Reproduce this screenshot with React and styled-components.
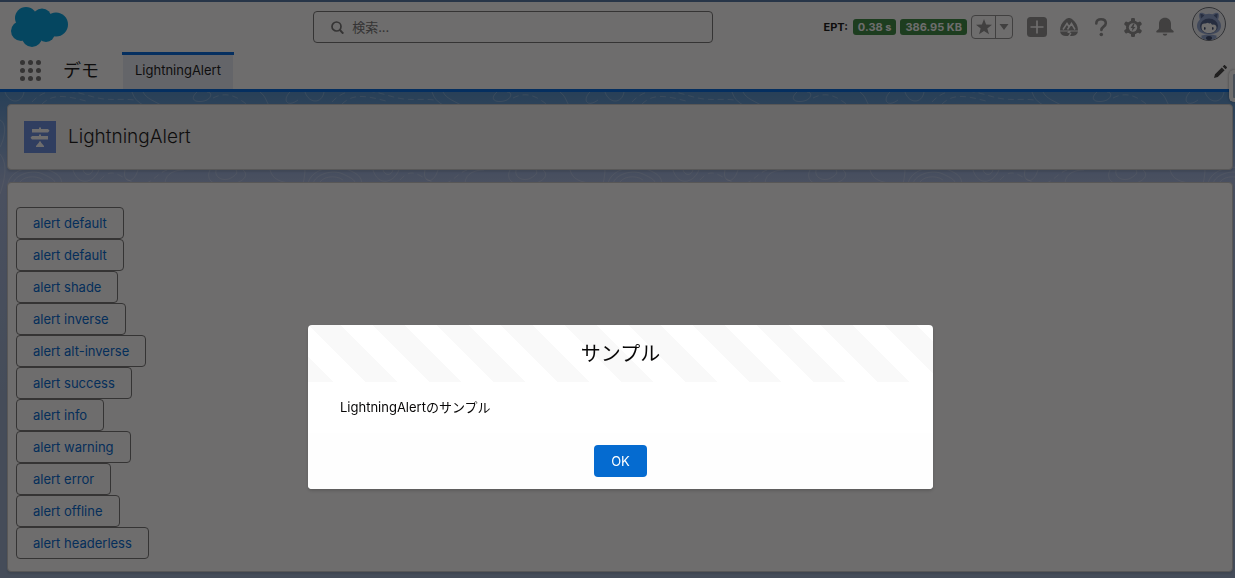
import React, { useState } from 'react';
import styled, { createGlobalStyle } from 'styled-components';

const GlobalStyle = createGlobalStyle`
  *, *::before, *::after {
    box-sizing: border-box;
  }
  body {
    margin: 0;
    font-family: Inter, 'Noto Sans CJK JP', sans-serif;
    font-size: 13px;
    line-height: 19px;
    color: #181818;
    background: #9bb0cf;
  }
  button, input {
    font: inherit;
  }
`;

const Page = styled.div`
  min-height: 100vh;
  display: flex;
  flex-direction: column;
`;

const Header = styled.header`
  background: #fff;
  border-top: 2px solid #5478a6;
  border-bottom: 3px solid #006ae0;
`;

const TopRow = styled.div`
  display: grid;
  grid-template-columns: minmax(0, 3fr) 400px minmax(0, 5fr);
  align-items: center;
  height: 50px;
`;

const LogoLink = styled.a`
  display: block;
  width: 58px;
  height: 40px;
  margin-left: 11px;
`;

const SearchBox = styled.label`
  display: flex;
  align-items: center;
  gap: 8px;
  height: 32px;
  padding: 0 16px;
  border: 1px solid #747474;
  border-radius: 4px;
  color: #747474;
`;

const SearchInput = styled.input`
  flex: 1;
  min-width: 0;
  border: 0;
  padding: 0;
  outline: none;
  background: transparent;

  &::placeholder {
    color: #747474;
    opacity: 1;
  }
`;

const Tools = styled.div`
  display: flex;
  align-items: center;
  justify-content: flex-end;
  height: 100%;
  padding-right: 9px;
`;

const Ept = styled.span`
  margin-right: 5px;
  font-size: 11px;
  font-weight: 700;
`;

const Badge = styled.span`
  margin-right: 4px;
  padding: 0 5px;
  border-radius: 3px;
  font-size: 11px;
  line-height: 16px;
  font-weight: 700;
  white-space: nowrap;
  color: #fff;
  background: #3a8a42;
`;

const Favorites = styled.div`
  display: flex;
  height: 24px;
  margin-right: 8px;
  border: 1px solid #919191;
  border-radius: 4px;
`;

const FavButton = styled.button`
  display: flex;
  align-items: center;
  justify-content: center;
  width: ${({ $narrow }) => ($narrow ? '17px' : '23px')};
  padding: 0;
  border: 0;
  border-left: ${({ $narrow }) => ($narrow ? '1px solid #919191' : '0')};
  background: transparent;
  color: #919191;
`;

const ToolButton = styled.button`
  display: flex;
  align-items: center;
  justify-content: center;
  width: 32px;
  height: 32px;
  padding: 0;
  border: 0;
  background: transparent;
  color: #919191;
`;

const AvatarButton = styled.button`
  align-self: flex-start;
  width: 34px;
  height: 34px;
  margin: 5px 0 0 11px;
  padding: 0;
  border: 0;
  background: transparent;
`;

const NavRow = styled.nav`
  display: flex;
  align-items: center;
  height: 37px;
  padding: 0 8px 0 20px;
`;

const PlainButton = styled.button`
  display: flex;
  padding: 0;
  border: 0;
  background: transparent;
  color: ${({ $color }) => $color};
`;

const AppName = styled.span`
  margin: 0 24px 0 22px;
  font-size: 18px;
  line-height: 24px;
`;

const Tab = styled.a`
  position: relative;
  display: flex;
  align-items: center;
  height: 100%;
  padding: 0 12px;
  color: #181818;
  text-decoration: none;
  background: #e6ecf6;

  &::before {
    content: '';
    position: absolute;
    top: 0;
    left: -1px;
    right: -1px;
    height: 3px;
    background: #006ae0;
  }
`;

const Spacer = styled.div`
  flex: 1;
`;

const Main = styled.main`
  position: relative;
  flex: 1;
  display: flex;
  flex-direction: column;
  gap: 12px;
  padding: 12px 2px 6px 7px;
  background: linear-gradient(#5692cc 0, #a8b9df 90px, #9bb0cf 300px);
`;

const Contours = styled.svg`
  position: absolute;
  inset: 0;
  width: 100%;
  height: 130px;
`;

const SideHandle = styled.div`
  position: absolute;
  top: -22px;
  right: 0;
  width: 6px;
  height: 32px;
  border: 4px solid #fff;
  border-right: 0;
  border-radius: 5px 0 0 5px;
  background: #a4b6cc;
  box-shadow: 0 0 3px rgba(0, 0, 0, 0.4);
`;

const Card = styled.section`
  position: relative;
  border: 1px solid #c9c9c9;
  border-radius: 4px;
  box-shadow: 0 2px 2px rgba(0, 0, 0, 0.1);
`;

const PageHeader = styled(Card)`
  display: flex;
  align-items: center;
  gap: 12px;
  padding: 16px;
  background: #f3f3f3;
`;

const PageIcon = styled.svg`
  display: block;
  width: 32px;
  height: 32px;
  background: #6a8de0;
`;

const PageTitle = styled.h1`
  margin: 0;
  font-size: 19px;
  line-height: 24px;
  font-weight: 300;
`;

const Content = styled(Card)`
  flex: 1;
  display: flex;
  flex-direction: column;
  align-items: flex-start;
  padding: 24px 8px 12px;
  background: #fff;
`;

const AlertButton = styled.button`
  height: 32px;
  padding: 0 16px;
  border: 1px solid #747474;
  border-radius: 4px;
  background: #fff;
  color: #0068d2;
`;

const Backdrop = styled.div`
  position: fixed;
  inset: 0;
  display: flex;
  align-items: flex-end;
  justify-content: center;
  padding: 0 0 89px 6px;
  background: rgba(8, 7, 7, 0.59);
`;

const Modal = styled.div`
  width: 625px;
  max-width: 90%;
  overflow: hidden;
  border-radius: 4px;
  color: #080707;
  background: #fff;
  box-shadow: 0 2px 3px rgba(0, 0, 0, 0.16);
`;

const ModalTitle = styled.h2`
  margin: 0;
  padding: 17px 16px 15px;
  font-size: 20px;
  line-height: 25px;
  font-weight: 400;
  text-align: center;
  background-image: linear-gradient(
    45deg,
    rgba(0, 0, 0, 0.025) 25%,
    transparent 25%,
    transparent 50%,
    rgba(0, 0, 0, 0.025) 50%,
    rgba(0, 0, 0, 0.025) 75%,
    transparent 75%
  );
  background-size: 64px 64px;
`;

const ModalBody = styled.div`
  padding: 16px 32px;
`;

const ModalFooter = styled.div`
  display: flex;
  justify-content: center;
  padding: 12px;
  background: #fefefe;
`;

const OkButton = styled.button`
  height: 32px;
  padding: 0 17px;
  border: 0;
  border-radius: 4px;
  color: #fff;
  background: #056bd0;
`;

const alerts = [
  'default',
  'default',
  'shade',
  'inverse',
  'alt-inverse',
  'success',
  'info',
  'warning',
  'error',
  'offline',
  'headerless',
];

const CloudLogo = () => (
  <svg width="58" height="40" viewBox="0 0 58 40" fill="#00a1e0">
    <circle cx="15" cy="11" r="11" />
    <circle cx="31" cy="11" r="9.5" />
    <circle cx="45" cy="17.500" r="12" />
    <circle cx="10" cy="24" r="10" />
    <circle cx="21" cy="30" r="10" />
    <circle cx="35" cy="26" r="9" />
    <path d="M12 8h30v20H12z" />
  </svg>
);

const Launcher = () => (
  <svg width="21" height="21" viewBox="0 0 21 21" fill="currentColor">
    {[2.5, 10.5, 18.5].map((y) =>
      [2.5, 10.5, 18.5].map((x) => <circle key={`${x}-${y}`} cx={x} cy={y} r="2.5" />)
    )}
  </svg>
);

const SearchIcon = () => (
  <svg width="14" height="14" viewBox="0 0 14 14" fill="none" stroke="currentColor" strokeWidth="1.700">
    <circle cx="6.500" cy="6.500" r="4.500" />
    <path d="M9.700 9.700l3.600 3.900" strokeWidth="2" />
  </svg>
);

const PlusIcon = () => (
  <svg width="20" height="20" viewBox="0 0 20 20">
    <rect width="20" height="20" rx="3.500" fill="currentColor" />
    <path d="M10 3.500v13M3.500 10h13" stroke="#fff" strokeWidth="1.700" />
  </svg>
);

const TrailIcon = () => (
  <svg width="20" height="20" viewBox="0 0 20 20">
    <path d="M1 13.500C1 9 3 5 6.500 2.500c2-2 5-2 7 0C17 5 19 9 19 13.500z" fill="currentColor" />
    <path d="M4 12.500l4-6 2.500 4M8.500 12.500l4-6 3.500 6" fill="none" stroke="#fff" strokeWidth="1.500" />
    <path d="M1 14.500h8.500l-1.500 1 3 1-2 2.500H7c-3 0-5.500-1.500-6-4.500zM12 14.500h7c-.5 3-3 4.500-6.500 4.500H11l1.500-3-2-.700z" fill="currentColor" />
  </svg>
);

const HelpIcon = () => (
  <svg width="20" height="20" viewBox="0 0 20 20">
    <path
      d="M5.300 6.500C5.300 3.500 7.200 2.300 10 2.300s4.800 1.500 4.800 4c0 3.400-4.400 3.300-4.400 6.700"
      fill="none"
      stroke="currentColor"
      strokeWidth="2.600"
      strokeLinecap="round"
    />
    <circle cx="10.300" cy="17.500" r="1.800" fill="currentColor" />
  </svg>
);

const GearIcon = () => (
  <svg width="20" height="20" viewBox="0 0 20 20">
    <g fill="currentColor">
      {[0, 60, 120].map((a) => (
        <rect key={a} x="8" y="1" width="4" height="19" rx="1.300" transform={`rotate(${a} 10 10.500)`} />
      ))}
      <circle cx="10" cy="10.500" r="7" />
    </g>
    <circle cx="10" cy="10.500" r="4.200" fill="#fff" />
    <path d="M10.300 6.800L7.500 11h2l-.7 3.300L12.500 10h-2l1-3.200z" fill="currentColor" />
  </svg>
);

const BellIcon = () => (
  <svg width="20" height="20" viewBox="0 0 20 20" fill="currentColor">
    <path d="M10 .8c-3.600 0-6 2.600-6 6v4.500c0 1.500-2.800 2.200-2.800 3.500 0 .5.300.7.800.7h16c.5 0 .8-.2.800-.7 0-1.300-2.800-2-2.800-3.500V6.800c0-3.400-2.400-6-6-6z" />
    <path d="M7.700 16.800h4.600c-.2 1.300-1.100 2-2.300 2s-2.100-.7-2.300-2z" />
  </svg>
);

const Avatar = () => (
  <svg width="34" height="34" viewBox="0 0 34 34">
    <circle cx="17" cy="17" r="16.500" fill="#f0f2f7" stroke="#6b7078" />
    <path d="M7.500 6.500c1-1.500 4-.5 6 .8 2.500-.8 4.500-.8 7 0 2-1.300 5-2.300 6-.8.8 2 .3 4-.4 6C30 16 30 22 26 25c-5 3-13 3-18 0-4-3-4-9-.1-12.500-.7-2-1.200-4-.4-6z" fill="#90a5d2" />
    <path d="M8.300 6.800c1.500 0 3 .8 4 1.700L9 11.500zM25.700 6.800c-1.500 0-3 .8-4 1.700l3.300 3z" fill="#51648f" />
    <ellipse cx="17" cy="19" rx="9" ry="7.500" fill="#51648f" />
    <path d="M9.500 20c0-2.500 1-3.500 3-3.500 1.500 0 2-.8 3.500-.8.5 1 2 1 3 .3 0 1.500 1.500 2 2.500 1.500 1.500.2 3 1 3 3 0 3.700-3.500 5.500-7.500 5.500s-7.500-2-7.500-6z" fill="#fff" />
    <ellipse cx="12.800" cy="21.500" rx=".8" ry="1.400" fill="#3b4a6e" />
    <ellipse cx="20.800" cy="21.500" rx=".8" ry="1.400" fill="#3b4a6e" />
    <path d="M9.500 28.500c4-1.500 11-1.500 15 0V31c-4 2.500-11 2.500-15 0z" fill="#90a5d2" />
    <ellipse cx="17" cy="31" rx="3" ry="2" fill="#3b4a6e" />
  </svg>
);

const PencilIcon = () => (
  <svg width="13" height="14" viewBox="0 0 13 14" fill="currentColor">
    <path d="M0 14l1-3.800L7.800 3.400l2.800 2.800L3.800 13zM8.700 2.500l1.100-1.100c.5-.5 1-.5 1.400 0l1.400 1.400c.5.5.5 1 0 1.400l-1.100 1.100z" />
  </svg>
);

const Topography = () => (
  <Contours aria-hidden="true">
    <defs>
      <pattern id="topo" width="300" height="130" patternUnits="userSpaceOnUse">
        <g fill="none" stroke="#fff" strokeOpacity=".22">
          <path d="M5 0c4 12 17 12 19 0M132 0c4 12 12 14 28 18M143 0c4 9 20 11 23 18M197 0c-9 8 0 12 10 8 5-3 5-8 0-8M260 0c8 6 5 12 14 18M290 0c-8 8-3 16 8 8" />
          <path d="M32 10c15-17 38-12 58-6s27 2 45 4M42 12c12-12 28-7 44-3M213 6c16-8 26 0 41 12" strokeDasharray="6 4" />
          <path d="M0 28c8 4 4 20 0 27M0 62c8 10 5 25 0 40" />
          <path d="M8 92c2-14 24-20 38-15s17 10 15 18M13 92c2-10 20-15 30-10s13 6 12 12M19 92c2-7 16-10 24-4M73 78c5 16 20 14 26 0M83 78c2 6 8 6 10 0M125 78c-3 12 8 16 13 0M165 92c0-12 12-14 19-14M210 78c-6 12 8 18 23 14s14-11 10-14M216 78c-2 8 8 12 15 8s6-6 5-8M270 78c3 10 10 12 25 14" />
          <path d="M100 88c13-15 20-2 35 3s20-9 32-13" strokeDasharray="6 4" />
        </g>
      </pattern>
    </defs>
    <rect width="100%" height="130" fill="url(#topo)" />
  </Contours>
);

const App = () => {
  const [open, setOpen] = useState(true);

  return (
    <Page>
      <GlobalStyle />
      <Header>
        <TopRow>
          <LogoLink href="#" aria-label="Salesforce">
            <CloudLogo />
          </LogoLink>
          <SearchBox>
            <SearchIcon />
            <SearchInput type="search" placeholder="検索..." aria-label="検索" />
          </SearchBox>
          <Tools>
            <Ept>EPT:</Ept>
            <Badge>0.38 s</Badge>
            <Badge>386.95 KB</Badge>
            <Favorites>
              <FavButton aria-label="お気に入り">
                <svg width="16" height="16" viewBox="0 0 16 16" fill="currentColor">
                  <path d="M8 0l2.100 5.600 5.900.2-4.700 3.700 1.700 5.800L8 12l-5 3.300 1.700-5.800L0 5.800l5.900-.2z" />
                </svg>
              </FavButton>
              <FavButton $narrow aria-label="お気に入りリスト">
                <svg width="10" height="6" viewBox="0 0 10 6" fill="currentColor">
                  <path d="M.5 0h9L5 6z" />
                </svg>
              </FavButton>
            </Favorites>
            <ToolButton aria-label="追加"><PlusIcon /></ToolButton>
            <ToolButton aria-label="Trailhead"><TrailIcon /></ToolButton>
            <ToolButton aria-label="ヘルプ"><HelpIcon /></ToolButton>
            <ToolButton aria-label="設定"><GearIcon /></ToolButton>
            <ToolButton aria-label="通知"><BellIcon /></ToolButton>
            <AvatarButton aria-label="プロファイル"><Avatar /></AvatarButton>
          </Tools>
        </TopRow>
        <NavRow>
          <PlainButton $color="#747474" aria-label="アプリケーションランチャー">
            <Launcher />
          </PlainButton>
          <AppName>デモ</AppName>
          <Tab href="#">LightningAlert</Tab>
          <Spacer />
          <PlainButton $color="#444" aria-label="編集">
            <PencilIcon />
          </PlainButton>
        </NavRow>
      </Header>

      <Main>
        <Topography />
        <PageHeader>
          <PageIcon viewBox="0 0 32 32" fill="#fff">
            <path d="M8 8h7V6.500h2V8h7l1.500 1.700L24 11.500H8zM8 15h7v-1.500h2V15h7v3.500H8L6.500 16.700zM15 20.500h2v1l3 3.500v1h-8v-1l3-3.500z" />
          </PageIcon>
          <PageTitle>LightningAlert</PageTitle>
        </PageHeader>
        <Content>
          {alerts.map((name, i) => (
            <AlertButton key={i} onClick={() => setOpen(true)}>
              alert {name}
            </AlertButton>
          ))}
        </Content>
        <SideHandle />
      </Main>

      {open && (
        <Backdrop>
          <Modal role="alertdialog" aria-modal="true" aria-labelledby="alert-title">
            <ModalTitle id="alert-title">サンプル</ModalTitle>
            <ModalBody>LightningAlertのサンプル</ModalBody>
            <ModalFooter>
              <OkButton onClick={() => setOpen(false)}>OK</OkButton>
            </ModalFooter>
          </Modal>
        </Backdrop>
      )}
    </Page>
  );
};

export default App;
